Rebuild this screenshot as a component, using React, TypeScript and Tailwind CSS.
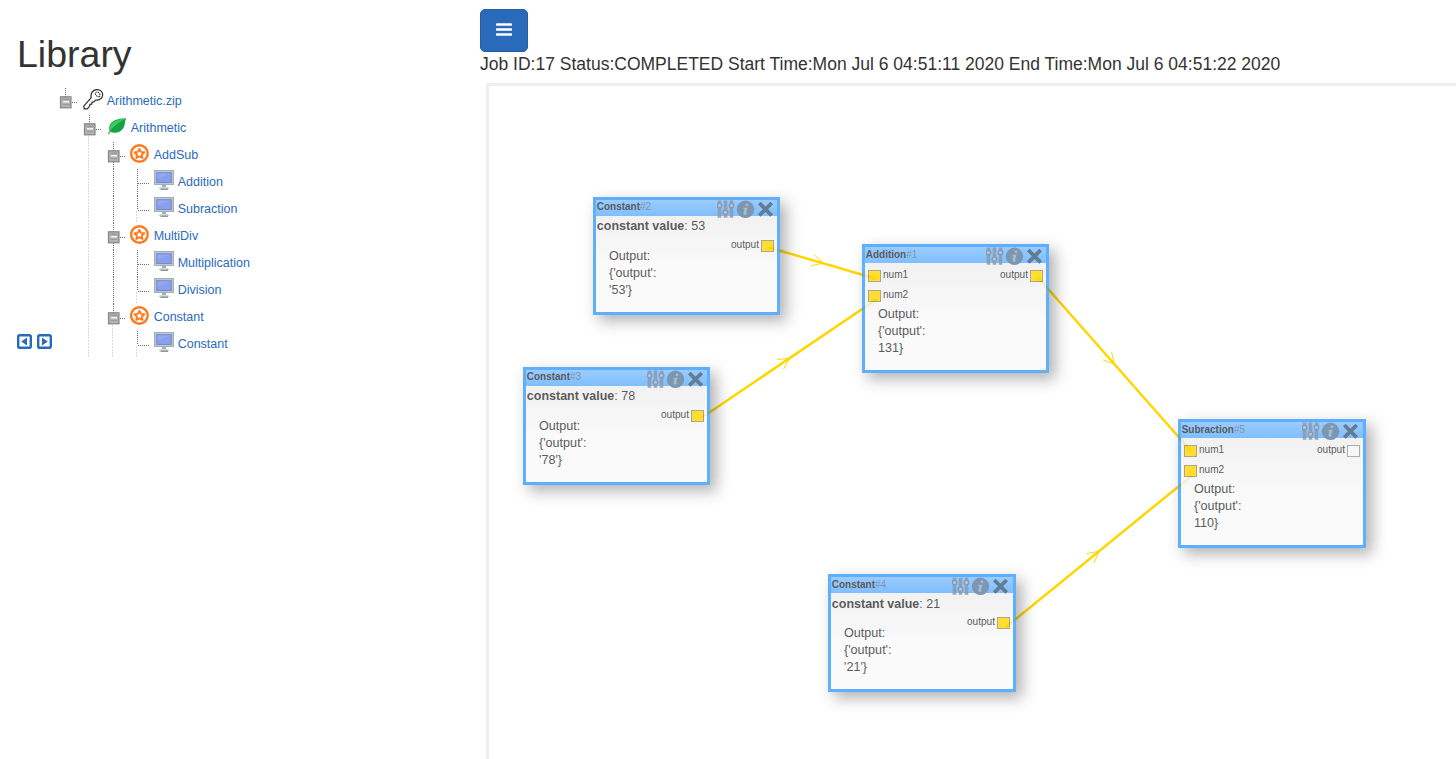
import React from "react";

const ORIGIN_X = 489;
const ORIGIN_Y = 86;

type IconKind = "key" | "leaf" | "star" | "monitor";
type TreeItem = {
  label: string;
  level: number;
  icon: IconKind;
  last?: boolean;
  trunk?: boolean;
  guides?: number[];
};

const TREE: TreeItem[] = [
  { label: "Arithmetic.zip", level: 0, icon: "key", last: true },
  { label: "Arithmetic", level: 1, icon: "leaf", last: true },
  { label: "AddSub", level: 2, icon: "star", guides: [88.5] },
  { label: "Addition", level: 3, icon: "monitor", trunk: true, guides: [88.5] },
  { label: "Subraction", level: 3, icon: "monitor", trunk: true, last: true, guides: [88.5] },
  { label: "MultiDiv", level: 2, icon: "star", guides: [88.5] },
  { label: "Multiplication", level: 3, icon: "monitor", trunk: true, guides: [88.5] },
  { label: "Division", level: 3, icon: "monitor", trunk: true, last: true, guides: [88.5] },
  { label: "Constant", level: 2, icon: "star", last: true, guides: [88.5] },
  { label: "Constant", level: 3, icon: "monitor", last: true, guides: [88.5, 112.5] },
];

const LINE_X = [65.5, 89.5, 113.5, 137.5];
const GUTTER = ["w-[24px]", "w-[48px]", "w-[71px]", "w-[95px]"];
const GUTTER_W = [24, 48, 71, 95];

function Gutter({ item }: { item: TreeItem }) {
  const x = LINE_X[item.level];
  const w = GUTTER_W[item.level];
  const leaf = item.level === 3;
  return (
    <svg className={`${GUTTER[item.level]} h-[27px] shrink-0`} viewBox={`59 0 ${w} 27`} fill="none">
      {item.guides?.map((g) => (
        <path key={g} d={`M${g} 0V27`} stroke="#d8d8d8" strokeDasharray="2 1" />
      ))}
      {item.trunk && <path d="M113.5 0V27" stroke="#6c6c6c" strokeDasharray="1 1" />}
      <path d={`M${x} 0V${item.last ? 14 : 27}`} stroke="#6c6c6c" strokeDasharray="1 1" />
      {item.last && item.level > 0 && (
        <path d={`M${x - 1} 15V27`} stroke="#d8d8d8" strokeDasharray="2 1" />
      )}
      <path d={`M${x + 0.5} 14.500h12`} stroke="#6c6c6c" strokeDasharray="1 1" />
      {!leaf && (
        <g>
          <rect x={x - 5} y="8.800" width="10.500" height="11" fill="#b0b2b4" stroke="#858585" strokeWidth="1.200" />
          <path d={`M${x - 3} 11.200h7`} stroke="#8f9193" />
          <path d={`M${x - 2.5} 13.800h6`} stroke="#fff" strokeWidth="1.300" />
          <path d={`M${x - 3} 16.500h7`} stroke="#999b9d" />
        </g>
      )}
    </svg>
  );
}

function TreeIcon({ kind }: { kind: IconKind }) {
  return (
    <svg className="mt-px h-[21px] w-[21px] shrink-0" viewBox="0 0 21 21" fill="none">
      {kind === "key" && (
        <g stroke="#333" strokeWidth="1.250" strokeLinejoin="round">
          <path d="M8.200 8.700C7.300 4.500 9.800 .8 13.500 .6C17.300 .5 20 3 19.600 6.200C19.300 9.500 16.300 11.700 12.600 11.100L10.800 13L8.900 13.100L8.800 15.100L6.800 15.300L6.700 17.200L4.300 19.800H1.200L.8 17.100Z" />
          <ellipse cx="14.700" cy="5.300" rx="2.800" ry="1.900" transform="rotate(45 14.700 5.300)" strokeWidth="1" strokeDasharray="1.600 .7" />
        </g>
      )}
      {kind === "leaf" && (
        <g>
          <path d="M19.300 2.300C10 2.500 3.700 5 2.400 10.300C2 12.500 2.500 14.500 2.900 15.700C8 18 14 16.500 16.800 11.500C18.200 8.800 17.500 5 19.300 2.300Z" fill="#12a548" />
          <path d="M18.500 2.800C10 3.300 4.200 6 2.900 11.300C2.800 12.800 2.900 14 3.100 15C8 9.800 12 6.500 18.500 2.800Z" fill="#3ccb62" />
          <path d="M1.300 18L3.300 15.200" stroke="#5aa878" strokeWidth="1.300" />
          <path d="M3.300 15.200C7 10.500 11.500 7.300 17.500 3.900" stroke="#12963f" strokeWidth=".6" />
        </g>
      )}
      {kind === "star" && (
        <g>
          <circle cx="9.400" cy="10.500" r="8.300" stroke="#ff7a1f" strokeWidth="2.400" />
          <path d="M9.400 5.800L10.900 8.900L14.300 9.300L11.800 11.700L12.500 15L9.400 13.400L6.300 15L7 11.700L4.500 9.300L7.900 8.900Z" stroke="#ff7a1f" strokeWidth="1.900" strokeLinejoin="round" />
        </g>
      )}
      {kind === "monitor" && (
        <g>
          <rect x=".5" y=".5" width="19" height="14" fill="#bccaca" stroke="#a0b0b2" />
          <rect x="2.700" y="2.700" width="14.600" height="9.800" fill="#8a9eec" stroke="#7488d6" />
          <path d="M3.500 3.500h13l-13 5z" fill="#95a7f0" />
          <path d="M8 15h4v2H8z" fill="#a3b0b0" />
          <path d="M4 19L6 16.900H14L16 19Z" fill="#d3dcdb" />
          <path d="M6.500 19.200h7.500" stroke="#73817f" strokeWidth="1.200" />
        </g>
      )}
    </svg>
  );
}

function Tree() {
  return (
    <ul className="flex flex-col">
      {TREE.map((item, i) => (
        <li key={i} className="flex h-[27px] items-start">
          <Gutter item={item} />
          <TreeIcon kind={item.icon} />
          <span className="ml-[2.700px] text-[12.500px] leading-[27px] whitespace-nowrap text-[#2a6abb]">{item.label}</span>
        </li>
      ))}
    </ul>
  );
}

function CaretSquare({ dir }: { dir: "left" | "right" }) {
  return (
    <svg className="h-[15px] w-[15px]" viewBox="0 0 15 15" fill="none">
      <rect x="1.200" y="1.200" width="12.600" height="12.600" rx="1.600" stroke="#2a6abb" strokeWidth="2.400" />
      <path d={dir === "left" ? "M10 3.500V11.500L4.200 7.500Z" : "M5 3.500V11.500L10.800 7.500Z"} fill="#2a6abb" />
    </svg>
  );
}

function NodeIcons({ wide }: { wide: boolean }) {
  return (
    <svg className={`absolute top-0 h-[19px] w-[58px] ${wide ? "right-[3px]" : "right-[2px]"}`} viewBox="0 0 58 19" fill="none">
      <g stroke="#6d839a" strokeWidth="1.500">
        <path
          d="M2.500 .5V3M2.500 8V17.800M8.500 .5V9.500M8.500 15V17.800M14.500 .5V3M14.500 8V17.800"
          strokeWidth="3.600"
          opacity=".85"
        />
        <circle cx="2.500" cy="5.500" r="2.300" fill="#93bce6" />
        <circle cx="8.500" cy="12.300" r="2.300" fill="#93bce6" />
        <circle cx="14.500" cy="5.500" r="2.300" fill="#93bce6" />
      </g>
      <circle cx="28.500" cy="9.300" r="8.700" fill="#5e7e9e" />
      <g fill="#90afcf">
        <circle cx="30" cy="4.800" r="1.400" />
        <path d="M26.200 7.900L30.500 7.400L28.900 13.200Q29.500 13.500 30.700 12.400Q29.800 14.900 27.500 14.800Q25.900 14.500 26.500 12.700L27.500 8.800L26 8.600Z" />
      </g>
      <path d="M42.300 3L54.700 15.500M54.700 3L42.300 15.500" stroke="#3c5c7a" strokeWidth="3.900" />
    </svg>
  );
}

function Port({ on }: { on: boolean }) {
  return (
    <span
      className={
        on
          ? "block h-[12px] w-[13px] border border-[#999070] bg-[#ffd500]"
          : "block h-[12px] w-[13px] border border-[#999999] bg-[#f6f6f6]"
      }
    />
  );
}

type NodeData = {
  x: number;
  y: number;
  w: number;
  name: string;
  id: number;
  value?: string;
  result: string;
  connected: boolean;
  lowered?: boolean;
};

const NODES: NodeData[] = [
  { x: 593, y: 197, w: 187, name: "Constant", id: 2, value: "53", result: "'53'}", connected: true },
  { x: 523, y: 367, w: 187, name: "Constant", id: 3, value: "78", result: "'78'}", connected: true },
  { x: 862, y: 244, w: 187, name: "Addition", id: 1, result: "131}", connected: true, lowered: true },
  { x: 1178, y: 419, w: 188, name: "Subraction", id: 5, result: "110}", connected: false, lowered: true },
  { x: 828, y: 574, w: 188, name: "Constant", id: 4, value: "21", result: "'21'}", connected: true, lowered: true },
];

function OutputPort({ on }: { on: boolean }) {
  return (
    <div className="flex items-start gap-[2px] pr-[3px]">
      <span className="leading-[13px]">output</span>
      <span className="pt-[2px]"><Port on={on} /></span>
    </div>
  );
}

function GraphNode({ node }: { node: NodeData }) {
  const isConstant = node.value !== undefined;
  return (
    <div
      className={`absolute flex flex-col border-[3px] border-[#389cff] bg-linear-to-b from-[#ececec] to-[#f9f9f9] to-60% text-[#333] opacity-80 shadow-[6px_6px_14px_0px_rgba(0,0,0,0.38)] ${isConstant ? "h-[118px]" : "h-[129px]"}`}
      style={{ left: node.x - ORIGIN_X, top: node.y - ORIGIN_Y, width: node.w }}
    >
      <div
        className={`relative h-[16px] shrink-0 bg-linear-to-b from-[#82c0ff] to-[#60afff] pl-[0.700px] text-[10px] ${node.lowered ? "leading-[15px]" : "leading-[13px]"}`}
      >
        <b>{node.name}</b>
        <span className="text-[#5f7a96]">#{node.id}</span>
        <NodeIcons wide={node.w === 188} />
      </div>
      {isConstant ? (
        <div className="flex flex-col">
          <div className={`h-[20px] pl-[0.800px] text-[12.500px] ${node.lowered ? "leading-[22px]" : "leading-[20px]"}`}>
            <b>constant value</b>: {node.value}
          </div>
          <div className="flex h-[12px] justify-end pt-[2px] text-[10.080px]">
            <OutputPort on={node.connected} />
          </div>
        </div>
      ) : (
        <div className="flex h-[43px] justify-between pt-[5px] text-[10.080px]">
          <div className="flex flex-col pl-[3px]">
            {["num1", "num2"].map((p) => (
              <div key={p} className="flex h-[20px] shrink-0 items-start gap-[2px]">
                <span className="pt-[2px]"><Port on /></span>
                <span className="leading-[13px]">{p}</span>
              </div>
            ))}
          </div>
          <OutputPort on={node.connected} />
        </div>
      )}
      <div className="flex flex-col pl-[13px] text-[12.600px] leading-[17px] whitespace-nowrap">
        <span>Output:</span>
        <span>{"{'output':"}</span>
        <span>{node.result}</span>
      </div>
    </div>
  );
}

const LINKS = [
  { x1: 769, y1: 247.5, x2: 877, y2: 279 },
  { x1: 702, y1: 417.5, x2: 877, y2: 299 },
  { x1: 1038, y1: 277.5, x2: 1191, y2: 451 },
  { x1: 1006, y1: 627, x2: 1192, y2: 475.5 },
];

function Links() {
  return (
    <svg className="absolute top-0 left-0 h-[673px] w-[967px]" viewBox="489 86 967 673" fill="none" stroke="#ffd600">
      {LINKS.map((l, i) => {
        const angle = (Math.atan2(l.y2 - l.y1, l.x2 - l.x1) * 180) / Math.PI;
        return (
          <g key={i}>
            <path d={`M${l.x1} ${l.y1}L${l.x2} ${l.y2}`} strokeWidth="2.500" />
            <path
              d="M-11 -5.800L0 0L-11 5.800"
              strokeWidth=".9"
              transform={`translate(${(l.x1 + l.x2) / 2} ${(l.y1 + l.y2) / 2}) rotate(${angle})`}
            />
          </g>
        );
      })}
    </svg>
  );
}

export default function App() {
  return (
    <div className="flex h-[759px] w-full overflow-hidden bg-white font-['Liberation_Sans',Arial,sans-serif] text-[#333]">
      <aside className="flex w-[480px] shrink-0 flex-col">
        <h1 className="h-[88px] pt-[33px] pl-[17px] text-[37.500px] leading-[42px]">Library</h1>
        <div className="flex h-[270px]">
          <div className="flex w-[59px] items-end gap-[5px] pb-[9px] pl-[17px]">
            <CaretSquare dir="left" />
            <CaretSquare dir="right" />
          </div>
          <Tree />
        </div>
      </aside>
      <main className="flex min-w-0 flex-1 flex-col pt-[9px]">
        <button className="flex h-[43px] w-[48px] items-start justify-center rounded-[5px] border border-[#245ba3] bg-[#2a6abb] pt-[13px]">
          <svg className="h-[14px] w-[16px]" viewBox="0 0 16 14" fill="#fff">
            <rect y=".2" width="16" height="2.600" rx=".7" />
            <rect y="5.200" width="16" height="2.600" rx=".7" />
            <rect y="10.200" width="16" height="2.600" rx=".7" />
          </svg>
        </button>
        <p className="h-[31px] text-[17.500px] leading-[24px] whitespace-nowrap">
          Job ID:17 Status:COMPLETED Start Time:Mon Jul 6 04:51:11 2020 End Time:Mon Jul 6 04:51:22 2020
        </p>
        <section className="relative ml-[6px] min-h-0 flex-1 overflow-hidden border-t-[3px] border-l-[3px] border-[#eeeeee]">
          <Links />
          {NODES.map((n) => (
            <GraphNode key={n.id} node={n} />
          ))}
        </section>
      </main>
    </div>
  );
}
